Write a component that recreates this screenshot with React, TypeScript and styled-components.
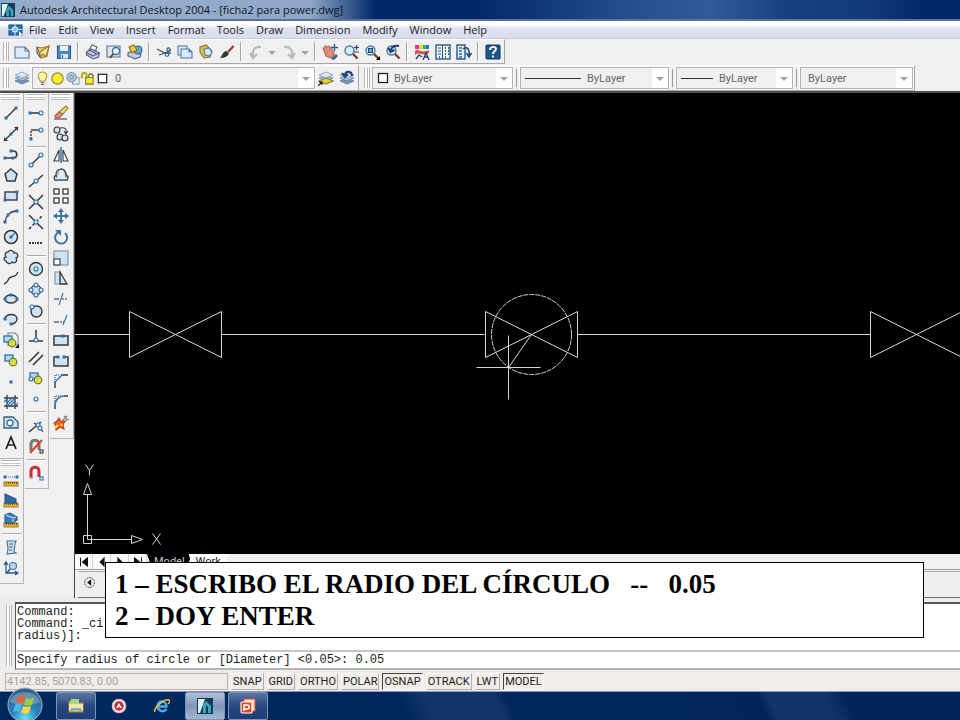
import React from "react";
import styled, { createGlobalStyle } from "styled-components";

const GlobalStyle = createGlobalStyle`
  * { box-sizing: border-box; }
  html, body { margin: 0; padding: 0; }
  body { font-family: "Open Sans", "Noto Sans", sans-serif; font-size: 11px; color: #1c1c1c; background: #f0f0f0; }
  button, select, input { font: inherit; color: inherit; margin: 0; padding: 0; border: 0; background: none; border-radius: 0; }
`;

/* ---------- icons ---------- */

const K = "#35383d";
const B = "#2f6fae";
const L = "#cfe3f3";

const dot = (x: number, y: number) => <rect x={x - 1.5} y={y - 1.5} width="3" height="3" fill={B} stroke="none" />;
const ring = (x: number, y: number, r = 2) => <circle cx={x} cy={y} r={r} fill="#e4f3fd" stroke={B} />;
const ruler = (
  <g>
    <rect x="1" y="11" width="14" height="4" fill="#efb72c" stroke="#8a6412" strokeWidth="0.8" />
    <path d="M3.5 11v2M5.500 11v2M7.500 11v2M9.500 11v2M11.500 11v2M13.500 11v2" stroke="#5d430b" strokeWidth="0.8" />
  </g>
);
const sheets = (
  <g strokeWidth="0.7">
    <path d="M1 11l7-3 7 3-7 3z" fill="#7792b8" stroke="#4f6f99" />
    <path d="M1 8l7-3 7 3-7 3z" fill="#a9bdd6" stroke="#5b7aa3" />
    <path d="M1 5l7-3 7 3-7 3z" fill="#dbe7f2" stroke="#6f8cb0" />
  </g>
);
const lens = (
  <g>
    <path d="M9.500 9.500l5 5" stroke="#7c3c20" strokeWidth="2.4" />
    <circle cx="6.500" cy="6.500" r="4.500" fill="#d7ecfa" stroke="#587b9c" strokeWidth="1.400" />
  </g>
);
const shapes = (
  <g>
    <rect x="2" y="3" width="8" height="6" fill="#b8d7f0" stroke={B} strokeWidth="1.300" />
    <circle cx="10" cy="10" r="3.800" fill="#d7df3c" fillOpacity="0.9" stroke="#6c7427" strokeWidth="1.200" />
  </g>
);

const icons: Record<string, React.ReactNode> = {
  app: (
    <g stroke="none">
      <rect width="16" height="16" fill="#123d55" />
      <path d="M1 1h7L3 15H1z" fill="#d9f1f4" />
      <path d="M6 15V7l3-4 5 5v7h-3V9L9 7v8z" fill="#3ea4bc" />
    </g>
  ),
  mdi: (
    <g>
      <rect x="2" y="3" width="13" height="10" fill="#2c75ae" stroke="#17507e" />
      <path d="M8 1v14M1 7.500h14" stroke="#9be1fb" />
      <circle cx="8" cy="7.500" r="2.500" stroke="#fff" />
      <path d="M12 9v6l2-2h2z" fill="#fff" stroke="none" />
    </g>
  ),
  new: <path d="M1 3h10l4 4v7H1z M11 3v4h4" fill="#dbeaf6" stroke="#54779c" />,
  open: (
    <g>
      <path d="M2 3l5 1 7-2-2 10-6 2z" fill="#f5cd62" stroke="#9b7423" />
      <path d="M5 8l9-6-3 11-3-3-3 3z" fill="#fbe7a9" stroke="#9b7423" />
      <path d="M2 3v6l3 4" stroke="#2e5d70" />
    </g>
  ),
  save: (
    <g>
      <path d="M1.500 2h13v12.500h-13z" fill="#4d86bd" stroke="#31608f" />
      <path d="M4 2h8v5H4z" fill="#e8f0f7" stroke="none" />
      <path d="M5 10h7v4.500H5z" fill="#dbe7f0" stroke="none" />
      <path d="M6.500 11v3" stroke="#31608f" />
    </g>
  ),
  print: (
    <g stroke="#525a7c">
      <path d="M4 6l3-5 5 2-2 5z" fill="#fff" />
      <path d="M1.500 8l5-3 8 4-1 4-5 2-7-4z" fill="#c4cce1" />
      <path d="M2 9l6 3 6-3M5 6.500l6 3" />
    </g>
  ),
  preview: (
    <g>
      <path d="M1 2h13v11H1z" fill="#d6e6f3" stroke="#54779c" />
      <path d="M8 9l-4 5" stroke="#6b4429" strokeWidth="2" />
      <circle cx="10" cy="7" r="3.500" fill="#eaf7ff" stroke="#3f6a94" strokeWidth="1.300" />
    </g>
  ),
  publish: (
    <g>
      <path d="M1 9l6-3 7 4-1 3-5 2-7-3z" fill="#c4cce1" stroke="#525a7c" />
      <circle cx="11" cy="6" r="4" fill="#65a5d3" stroke="#2e6390" />
      <path d="M2 3l5-2 3 5-5 3z" fill="#f3c93b" stroke="#8d6e16" />
    </g>
  ),
  cut: (
    <g>
      <path d="M1 5l8 4h6M3 11l6-2 6-3" stroke="#3a5673" strokeWidth="1.300" />
      <circle cx="11" cy="10.500" r="1.800" stroke="#3a5673" />
      <circle cx="12.500" cy="5.500" r="1.600" stroke="#3a5673" />
    </g>
  ),
  copyclip: (
    <g fill="#dcebf7" stroke="#477aa8">
      <path d="M1 2h9v9H1z" />
      <path d="M4 5h8l3 3v6H4z M12 5v3h3" />
    </g>
  ),
  paste: (
    <g>
      <path d="M2 3l6-2 6 6-2 6-6 1-4-6z" fill="#e4bf4a" stroke="#86702a" />
      <path d="M6 5l5-1 3 4-2 4-5-1z" fill="#d6e8f6" stroke="#477aa8" />
    </g>
  ),
  brush: (
    <g>
      <path d="M14.500 2L9 8" stroke="#a23b2c" strokeWidth="2.200" />
      <path d="M1 14c2-1 2-6 6-7l3 2c-1 4-5 5-9 5z" fill="#393534" stroke="none" />
    </g>
  ),
  undo: <path d="M13 3C7 2 4 6 5 12M2 9l3 5 4-4" stroke="#b8b8b8" strokeWidth="2.200" />,
  redo: <path d="M3 3c6-1 9 3 8 9M14 9l-3 5-4-4" stroke="#b8b8b8" strokeWidth="2.200" />,
  caret: <path d="M4 7h8L8 11z" fill="#a2a2a2" stroke="none" />,
  pan: (
    <g>
      <path d="M1 4l2 0 0-2 2 1 2-1 5 6v3l-3 3-5-2z" fill="#dd8b7c" stroke="#b5695c" />
      <path d="M9 15l5-5 2 2-4 4z" fill="#3a618a" stroke="none" />
      <path d="M12.500 0v7M9 3.500h7" stroke="#2b5688" strokeWidth="1.300" />
    </g>
  ),
  zoomrt: (
    <g>{lens}<path d="M13.500 1v5M11 3.500h5M11 8h5" stroke="#234d78" strokeWidth="1.200" /></g>
  ),
  zoomwin: (
    <g>{lens}<rect x="4.500" y="4.500" width="4" height="4" fill="#74a8d3" stroke="#234d78" /><path d="M16 12v4h-4z" fill="#000" stroke="none" /></g>
  ),
  zoomprev: (
    <g>{lens}<path d="M14 2c-4-1-7 0-8 4M3.500 4l2 4 4-2" stroke="#183d6b" strokeWidth="2" /></g>
  ),
  props: (
    <g stroke="none">
      <path d="M1 1h4v4H1z" fill="#f02ba0" /><path d="M5 1h4v4H5z" fill="#f4d92b" /><path d="M9 1h3v4H9z" fill="#30b95d" /><path d="M12 1h3v4h-3z" fill="#2c6ddb" />
      <path d="M1 7c3-3 6 3 14-1v3c-7 4-9-2-14 2z" fill="#c5584d" />
      <path d="M2 15l3-4 3 2M9 16l3-7 3 7M10 13h4" fill="none" stroke="#29466b" strokeWidth="1.400" />
    </g>
  ),
  dcenter: (
    <g>
      <rect x="1" y="1" width="14" height="14" fill="#eef4fa" stroke="#28588c" strokeWidth="1.400" />
      <path d="M7.500 1v14M3 4h3M3 7h3M3 10h3" stroke="#28588c" />
      <path d="M10 4h1M13 4h1M10 7h1M13 7h1M10 10h1M13 10h1M10 13h1M4 13h1" stroke="#42722f" strokeWidth="2" />
    </g>
  ),
  tools: (
    <g>
      <path d="M1 1h8v14H1z" fill="#e6eff8" stroke="#28588c" strokeWidth="1.400" />
      <path d="M3 4h3M3 7h3M3 10h3M3 13h3" stroke="#33679b" strokeWidth="1.400" />
      <path d="M7 5c4-3 7 0 6 6M10.500 9l2.500 4 2.500-4" stroke="#28466b" strokeWidth="1.500" />
    </g>
  ),
  help: (
    <g>
      <rect x="1" y="1" width="14" height="14" rx="1" fill="#1f5687" stroke="#123d66" />
      <path d="M5 6c0-4 6-4 6-1 0 2-3 2-3 5M8 11.500v2" stroke="#fff" strokeWidth="1.900" />
    </g>
  ),
  layers: sheets,
  layerset: (
    <g>{sheets}<path d="M1 11l7-3 7 3-7 3z" fill="#e1d442" stroke="#8f8624" /><path d="M0 16l4-4M1 12h3v3" stroke="#111" /></g>
  ),
  layerprev: <g>{sheets}<path d="M13 6c0-5-6-6-7-1M3 3l3 4 3-3" stroke="#1c4375" strokeWidth="2" /></g>,
  bulb: (
    <g>
      <path d="M5.500 11C5 9 3.500 8 3.500 5.500a4.500 4.500 0 0 1 9 0C12.500 8 11 9 10.500 11z" fill="#fdf6a1" stroke="#a39a36" />
      <path d="M6 12.500h4M6.500 14.500h3" stroke="#666" />
    </g>
  ),
  sun: <circle cx="8" cy="8" r="6" fill="#f7ee34" stroke="#8f8c2d" strokeWidth="1.200" />,
  vpfreeze: (
    <g>
      <rect x="8" y="7" width="7" height="7" fill="#e6edf2" stroke="#8a9dad" />
      <circle cx="7" cy="6.500" r="5" fill="#b7cddd" stroke="#7892a6" /><circle cx="7" cy="6.500" r="2" stroke="#7892a6" />
    </g>
  ),
  lock: (
    <g>
      <path d="M2 8V5c0-4 5-4 5 0v4" stroke="#b3ae23" strokeWidth="2.200" />
      <path d="M6 7h8v7H6z" fill="#f0ea3d" stroke="#827e22" /><path d="M9 7c0-6 5-5 5 0" stroke="#827e22" strokeWidth="1.500" />
    </g>
  ),
  swatch: <rect x="3.500" y="3.500" width="9" height="9" fill="#fff" stroke="#222" strokeWidth="1.300" />,
  line: <g><path d="M3 13L13 3" strokeWidth="1.400" />{dot(3, 13)}{dot(13, 3)}</g>,
  xline: <g><path d="M1 15L15 1" strokeWidth="1.500" /><path d="M11 1h4v4zM1 11v4h4z" fill={K} stroke="none" />{dot(8, 8)}</g>,
  pline: <g><path d="M2 12h8c5 0 5-7 0-7H8" strokeWidth="1.700" />{dot(2, 12)}{dot(8, 5)}{dot(10, 12)}</g>,
  polygon: <path d="M8 2l6 5-2 7H4L2 7z" fill={L} strokeWidth="1.500" />,
  rect: <g><rect x="2" y="4" width="12" height="8" fill={L} strokeWidth="1.400" />{dot(14, 4)}{dot(2, 12)}</g>,
  arc: <g><path d="M2 14C3 8 7 3 14 3" strokeWidth="1.400" />{dot(2, 14)}{dot(5, 7)}{dot(14, 3)}</g>,
  circle: <g><circle cx="8" cy="8" r="6.500" fill={L} strokeWidth="1.500" /><path d="M8 8l4-4" stroke={B} />{dot(8, 8)}</g>,
  cloud: <path d="M5 3c2-3 6-1 6 1 4-1 5 4 2 5 2 4-2 6-4 4-2 3-6 1-6-1-3-1-2-4 0-4-2-3 0-5 2-5z" fill={L} strokeWidth="1.300" />,
  spline: <path d="M1 14c5-1 3-6 7-7s5-1 7-5" strokeWidth="1.300" />,
  ellipse: <g><ellipse cx="8" cy="8" rx="6" ry="4" fill={L} strokeWidth="1.500" />{dot(2, 8)}{dot(14, 8)}{dot(8, 4)}</g>,
  earc: <g><path d="M2 8c1-6 12-6 12 0 0 3-3 5-6 5" fill={L} strokeWidth="1.400" />{dot(2, 8)}{dot(8, 13)}</g>,
  insert: <g><path d="M5 1h7l3 3v9H5z" fill="#eef5fa" stroke="#65839b" /><g transform="translate(-1 1)">{shapes}</g><path d="M16 12v4h-4z" fill="#111" stroke="none" /></g>,
  block: shapes,
  point: dot(8, 9),
  hatch: <g><path d="M4 1v14M12 1v14M1 4h14M1 12h14" strokeWidth="1.300" /><path d="M4 9l5-5M4 12l8-8M7 12l5-5M1 8l3-3M12 12l3-3" stroke={B} /></g>,
  region: <g><path d="M1 3h9l5 5v6H1z" fill={L} stroke="#3b5e82" strokeWidth="1.300" /><circle cx="7" cy="9" r="3" fill="#fff" stroke={B} strokeWidth="1.300" /></g>,
  text: <path d="M3 14L8 2l5 12M5 10h6" stroke="#1e1e1e" strokeWidth="1.700" />,
  dist: <g>{ruler}<path d="M3 6h10" stroke={B} strokeDasharray="1 1" />{dot(2, 6)}{dot(14, 6)}</g>,
  area: <g>{ruler}<path d="M2 2l11 5v4H2z" fill="#2f6ba6" stroke="#235585" /></g>,
  mass: <g>{ruler}<path d="M2 3l5-2 7 4v3l-4 3H2z" fill="#3f7db8" stroke="#235585" /><path d="M3 3l7 3 3-1M10 7v3" stroke="#c9e3f6" /></g>,
  list: <g><path d="M4 2l9 0-1 3-1 8 2 1-9 1 1-5z" fill="#cfe1ee" stroke="#4a718f" /><path d="M6 5h4M6 8h4M6 11h3" stroke="#3c617f" /></g>,
  locate: <g><path d="M3 3v10h11M1 5l2-3 2 3M12 11l3 2-3 2" stroke="#285989" strokeWidth="1.300" /><path d="M7 9l-3 4" stroke="#285989" strokeWidth="1.500" /><circle cx="10" cy="6" r="3.500" fill="#b7d8ee" stroke="#3f6f9b" /></g>,
  track: <g><path d="M2 8h12" strokeWidth="1.500" />{dot(2, 8)}{ring(13, 8)}</g>,
  from: <g><path d="M3 13V5" strokeDasharray="2 1" strokeWidth="1.400" /><path d="M3 4h10" strokeWidth="1.400" />{dot(3, 13)}{ring(13, 4)}</g>,
  endpt: <g><path d="M3 13L13 3" strokeWidth="1.400" />{ring(13, 3)}{ring(3, 13)}</g>,
  midpt: <g><path d="M1 14L15 2" strokeWidth="1.400" />{ring(8, 8)}</g>,
  inter: <g><path d="M1 1l14 14M1 15L15 1" strokeWidth="1.500" />{ring(8, 8)}</g>,
  appint: <g><path d="M1 1l14 14" strokeWidth="1.500" /><path d="M1 15L15 1" strokeDasharray="3 2" strokeWidth="1.500" />{ring(8, 8)}</g>,
  extension: <path d="M1 8h7M9 8h6" strokeWidth="1.800" strokeDasharray="2 1" />,
  center: <g><circle cx="8" cy="8" r="6.500" fill={L} strokeWidth="1.400" />{ring(8, 8)}</g>,
  quadrant: <g><circle cx="8" cy="8" r="5" fill={L} />{ring(8, 3)}{ring(8, 13)}{ring(3, 8)}{ring(13, 8)}</g>,
  tangent: <g><circle cx="8.500" cy="8.500" r="5.500" fill={L} strokeWidth="1.400" />{ring(4, 4)}</g>,
  perp: <g><path d="M8 1v10M1 12h14" strokeWidth="1.500" />{ring(8, 11)}</g>,
  parallel: <path d="M1 12L11 2M5 15L15 5" strokeWidth="1.600" />,
  insertpt: <g>{shapes}{ring(3, 9)}</g>,
  node: ring(8, 8),
  nearest: <g><path d="M1 14L13 4" strokeWidth="1.500" /><path d="M6 5l4 3 5 6" />{ring(10, 7)}{ring(12, 10)}</g>,
  none: <g><path d="M3 13V6c0-5 8-5 8 0v6" stroke="#7d776f" strokeWidth="3" /><path d="M2 15L14 2" stroke="#e33c2c" strokeWidth="2" /><rect x="12" y="12" width="3" height="3" /></g>,
  osnap: <g><path d="M3 13V6c0-5 8-5 8 0v6" stroke="#c42f38" strokeWidth="3" /><path d="M1.500 13h3" stroke="#aaa" strokeWidth="2" /><rect x="12" y="12" width="3" height="3" fill="#fff" stroke={B} /></g>,
  erase: <g><path d="M1 14h13" stroke="#444" /><path d="M2 11l4-4 4 2-4 4H3z" fill="#ed8b83" stroke="#9e514b" /><path d="M6 7l7-6 2 2-5 6z" fill="#f0df67" stroke="#8f8331" /></g>,
  copy: <g><circle cx="4" cy="4" r="3" fill={L} /><circle cx="7" cy="11" r="3" fill={L} /><circle cx="12" cy="12" r="3" fill={L} /><path d="M7 2c5-1 7 1 6 5M11 5l2 3 2-3" stroke={K} /></g>,
  mirror: <g><path d="M6 3v11H1zM10 3v11h5z" fill="#fafafa" /><path d="M8 0v16" stroke={B} strokeWidth="1.500" /></g>,
  offset: <g><path d="M1 13h14M1 10h3c-1-2 0-3 1-3-1-7 8-7 7 0 1 0 2 1 1 3h2" strokeWidth="1.200" stroke={B} /><path d="M2 13c-2-3 0-5 1-4C2 0 14 0 13 9c2-1 3 1 1 4z" fill={L} fillOpacity="0.5" strokeWidth="1.200" /></g>,
  array: <g fill="#fff" strokeWidth="1.300"><rect x="1" y="1" width="5" height="5" /><rect x="10" y="1" width="5" height="5" /><rect x="1" y="10" width="5" height="5" /><rect x="10" y="10" width="5" height="5" /></g>,
  move: <g><path d="M8 2v12M2 8h12" stroke="#4473a2" strokeWidth="2" /><path d="M8 0l3 4H5zM8 16l3-4H5zM0 8l4-3v6zM16 8l-4-3v6z" fill="#4473a2" stroke="none" /></g>,
  rotate: <g><path d="M6 3a6 6 0 1 0 6 1" stroke="#4473a2" strokeWidth="2" /><path d="M2 1h6v6z" fill="#4473a2" stroke="none" /></g>,
  scale: <g><rect x="1" y="1" width="14" height="14" fill={L} stroke="#7b91a7" /><rect x="1" y="9" width="6" height="6" fill="#fff" /></g>,
  stretch: <g><path d="M2 2h5v12H2z" fill={L} stroke="#7b91a7" /><path d="M7 2l7 12H7z" fill={L} strokeWidth="1.300" /></g>,
  trim: <g><path d="M6 14L10 2" stroke={B} /><path d="M1 8h5" /><path d="M9 8h6" strokeDasharray="2 1" /></g>,
  extend: <g><path d="M10 13l4-10" stroke={B} /><path d="M1 10h5" /><path d="M7 10h4" strokeDasharray="2 1" /></g>,
  break1: <g><path d="M1 4h14v9H1z" fill={L} strokeWidth="1.500" />{dot(10, 4)}</g>,
  break2: <g><path d="M2 4v9h12V4z" fill={L} stroke="none" /><path d="M5 4H1v9h14V4h-4" strokeWidth="1.500" />{dot(5, 4)}{dot(11, 4)}</g>,
  chamfer: <g><path d="M2 15V8M8 2h7" strokeWidth="1.400" /><path d="M2 7V2h5" strokeDasharray="1 1" /><path d="M2 9l7-7" stroke={B} strokeWidth="1.500" /></g>,
  fillet: <g><path d="M2 15v-4M11 2h4" strokeWidth="1.400" /><path d="M2 9V2h7" strokeDasharray="1 1" /><path d="M2 11c0-5 4-9 9-9" stroke={B} strokeWidth="1.700" /></g>,
  explode: <g><path d="M1 8l3-2 2-3 2 4 4-1-2 4 1 4-4-2-4 3v-4z" fill="#ee6a23" stroke="#ba3a1e" /><path d="M2 13l3-3M8 9l1 2" stroke="#f8df35" strokeWidth="2" /><path d="M9 6l5-5M11 1l3 3M12 6l4-2" stroke="#777" /></g>,
  first: <path d="M4 3v10M12 3v10L6 8z" fill="#111" stroke="#111" />,
  prev: <path d="M11 2v12L5 8z" fill="#111" stroke="none" />,
  next: <path d="M5 2v12l6-6z" fill="#111" stroke="none" />,
  last: <path d="M12 3v10M4 3v10l6-5z" fill="#111" stroke="#111" />,
  back: <g><circle cx="8" cy="8" r="6" stroke="#222" strokeDasharray="2 1" /><path d="M10 4v8L5 8z" fill="#111" stroke="none" /></g>,
  explorer: (
    <g>
      <path d="M1 3h6l1 2h7v9H1z" fill="#e9c55a" stroke="#a98a30" /><path d="M3 1h8v6H3z" fill="#a8d98b" stroke="none" />
      <path d="M1 6h14v6H1z" fill="#f9e7a0" stroke="none" /><path d="M4 14v-3h8v3" stroke="#5cb4e4" strokeWidth="2" />
    </g>
  ),
  media: (
    <g>
      <circle cx="8" cy="8" r="6.800" fill="#f1eded" stroke="#c9c2c2" /><circle cx="8" cy="8" r="4.700" fill="#cc2534" stroke="none" />
      <path d="M8 5l3 5H9L8 8l-1 2H5z" fill="#fff" stroke="none" />
    </g>
  ),
  ie: (
    <g>
      <path d="M12.500 11c-3 4-9 2-9-3 0-6 9-6 9 .5h-8" stroke="#45aee9" strokeWidth="2.400" />
      <path d="M1 14c-3-3 10-14 14-12 2 1 0 3-1 4" stroke="#edc23c" strokeWidth="1.500" />
    </g>
  ),
  ppt: (
    <g>
      <path d="M4 1h11v12H4z" fill="#f6d5cb" stroke="#d84e2e" /><rect x="1" y="4" width="11" height="11" rx="1" fill="#d94a2b" stroke="#fff" />
      <path d="M4 13V7h3c3 0 3 4 0 4H4" stroke="#fff" strokeWidth="1.500" />
    </g>
  ),
};

const Svg = styled.svg<{ $size?: number }>`
  width: ${(p) => p.$size ?? 16}px;
  height: ${(p) => p.$size ?? 16}px;
  flex: none;
  display: block;
`;

const Icon = ({ name, size }: { name: string; size?: number }) => (
  <Svg $size={size} viewBox="0 0 16 16" fill="none" stroke={K} strokeWidth="1.100" aria-hidden="true">
    {icons[name]}
  </Svg>
);

/* ---------- frame ---------- */

const Page = styled.div`
  position: relative;
  display: grid;
  grid-template-rows: 21px 18px 26px 28px minmax(400px, 1fr) 73px 21px 28px;
  min-height: 100vh;
  overflow: hidden;
`;

const TitleBar = styled.header`
  display: flex;
  align-items: center;
  gap: 5px;
  padding: 0 1px;
  color: #10151d;
  white-space: nowrap;
  border-bottom: 2px solid #5c7398;
  background:
    linear-gradient(90deg, #8ea7c8 0, #9bb0cd 60px, #8fa8c9 310px, transparent 375px),
    linear-gradient(90deg, #03296a 0%, #03296a 50%, #274f8e 66%, #315a98 74%, #17407f 82%, #143b79 90%, #03296a 96%);
`;

const Title = styled.h1`
  margin: 0;
  font-size: 11px;
  line-height: 18px;
  font-weight: 400;
`;

const MenuBar = styled.nav`
  display: flex;
  align-items: center;
  gap: 12px;
  padding-left: 7px;
  background: linear-gradient(#fdfdff 0 25%, #dde2f0 45%, #d8deee);
  border-bottom: 1px solid #c9cdd8;
`;

const MenuItem = styled.button`
  font-size: 11px;
  line-height: 16px;
`;

const MenuIcon = styled.span`
  margin-right: -6px;
`;

const Bar = styled.div`
  display: flex;
  align-items: stretch;
  min-width: 0;
  border-bottom: 1px solid #f0f0f0;
`;

const BottomBar = styled(Bar)`
  border-bottom: 2px solid #4d4d4d;
`;

const Strip = styled.div<{ $start?: boolean }>`
  display: flex;
  align-items: center;
  padding: 0 1px 0 ${(p) => (p.$start ? 3 : 5)}px;
  border: 1px solid #a6a6a6;
  border-width: 0 1px 1px 0;
  border-top: 1px solid #fff;
`;

const Grip = styled.span`
  align-self: stretch;
  flex: none;
  width: 6px;
  margin: 2px 2px 2px 0;
  border: 2px solid #b5b5b5;
  border-width: 0 1px;
  background: linear-gradient(90deg, #fff 0 2px, #b5b5b5 2px 3px, #fff 3px);
`;

const ToolButton = styled.button<{ $narrow?: boolean }>`
  display: flex;
  align-items: center;
  justify-content: center;
  flex: none;
  width: ${(p) => (p.$narrow ? 12 : 21)}px;
  height: 20px;
`;

const Divider = styled.span`
  flex: none;
  width: 8px;
  height: 19px;
  background: linear-gradient(90deg, transparent 3px, #a2a2a2 3px 4px, #fff 4px 5px, transparent 5px);
`;

const Combo = styled.label<{ $width: number }>`
  display: flex;
  align-items: center;
  width: ${(p) => p.$width}px;
  height: 22px;
  padding-left: 2px;
  border: 1px solid #b2b2b2;
  outline: 1px solid #fafafa;
  color: #666;
`;

const ComboSelect = styled.select`
  flex: 1;
  min-width: 0;
  height: 20px;
  padding-left: 3px;
  appearance: none;
  font-family: Roboto, sans-serif;
  font-size: 11px;
  outline: none;
`;

const ComboArrow = styled.span`
  display: flex;
  align-items: center;
  justify-content: center;
  width: 16px;
  height: 20px;
  background: #fff;
`;

const Sample = styled.span<{ $width: number }>`
  flex: none;
  width: ${(p) => p.$width}px;
  height: 1px;
  margin: 0 3px 0 2px;
  background: #333;
`;

const ComboIcons = styled.span`
  display: flex;
  margin-right: 2px;
`;

const Thin = styled.span`
  width: 1px;
  height: 18px;
  margin: 0 3px;
  background: #9a9a9a;
`;

/* ---------- workspace ---------- */

const Workspace = styled.main`
  display: grid;
  grid-template-columns: 74px minmax(0, 1fr);
  min-height: 0;
`;

const Palettes = styled.aside`
  display: flex;
  align-items: flex-start;
  gap: 1px;
`;

const Column = styled.div`
  flex: none;
`;

const Palette = styled.div`
  display: flex;
  flex-direction: column;
  width: 24px;
  padding: 1px 0 5px;
  border: 1px solid #b4b4b4;
  border-width: 0 1px 1px 0;
`;

const PaletteGrip = styled.span`
  height: 6px;
  margin: 0 3px 3px 1px;
  border: 1px solid #b9b9b9;
  border-width: 1px 0;
  background: linear-gradient(#fff 0 2px, #c4c4c4 2px 3px, #fff 3px);
`;

const PaletteList = styled.div<{ $height: number }>`
  display: flex;
  flex-direction: column;
  height: ${(p) => p.$height}px;
`;

const PaletteButton = styled.button`
  display: flex;
  flex: 1;
  min-height: 0;
  align-items: center;
  justify-content: center;
  width: 22px;
`;

const PaletteRule = styled.span`
  flex: none;
  height: 6px;
  margin: 0 2px;
  background: linear-gradient(transparent 2px, #aaa 2px 3px, #fff 3px 4px, transparent 4px);
`;

const Document = styled.section`
  display: grid;
  grid-template-rows: minmax(0, 1fr) 16px 28px;
  border-left: 1px solid #444;
`;

const Canvas = styled.svg`
  display: block;
  width: 100%;
  height: 100%;
  background: #000;
`;

const TabRow = styled.div`
  display: flex;
  background: #f1f1f1;
  border-bottom: 1px solid #9d9d9d;
`;

const TabArrow = styled.button`
  display: flex;
  align-items: center;
  justify-content: center;
  width: 18px;
  border-right: 1px solid #d4d4d4;
  background: #fafafa;
`;

const Tab = styled.button<{ $active?: boolean }>`
  height: 15px;
  padding: 0 7px;
  margin-right: ${(p) => (p.$active ? -3 : 0)}px;
  font-family: Roboto, sans-serif;
  font-size: 11px;
  line-height: 14px;
  color: ${(p) => (p.$active ? "#c8c8c8" : "#222")};
  background: ${(p) => (p.$active ? "#000" : "#fff")};
  clip-path: polygon(0 0, 100% 0, calc(100% - 5px) 100%, 5px 100%);
`;

const ScrollRow = styled.div`
  display: flex;
  align-items: center;
  padding: 0 0 4px 5px;
  margin: 1px 0 0 3px;
  border-top: 1px solid #a9a9a9;
  border-bottom: 1px solid #6d6d6d;
  background: #f0eded;
`;

/* ---------- command line and status ---------- */

const CommandArea = styled.section`
  display: flex;
  padding: 4px 0 1px 6px;
  background: #ececec;
`;

const CommandGrip = styled(Grip)`
  margin: 3px 3px 4px 0;
`;

const CommandBox = styled.div`
  flex: 1;
  min-width: 0;
  display: grid;
  grid-template-rows: 1fr 16px;
  padding-left: 1px;
  background: #fff;
  border: 1px solid #555;
  border-width: 2px 0 2px 1px;
  border-bottom-color: #b5b5b5;
  font-family: "Liberation Mono", monospace;
  font-size: 12px;
  line-height: 12px;
  color: #222;
`;

const History = styled.pre`
  margin: 0;
  padding-top: 2px;
  font: inherit;
  border-bottom: 2px solid #c6c6c6;
`;

const CommandInput = styled.input`
  width: 100%;
  font: inherit;
  outline: none;
`;

const StatusBar = styled.div`
  display: flex;
  align-items: center;
  gap: 3px;
  padding: 2px 5px 1px;
  background: #f0ecea;
  border-bottom: 1px solid #8b99b2;
  font-family: Roboto, sans-serif;
  font-size: 11px;
`;

const Coordinates = styled.output`
  width: 223px;
  height: 17px;
  padding-left: 1px;
  line-height: 15px;
  color: #a2a2a2;
  border: 1px solid #b9b5b3;
`;

const Toggle = styled.button<{ $on?: boolean }>`
  height: 17px;
  padding: 0 1px;
  line-height: 15px;
  border: 1px solid;
  border-color: ${(p) => (p.$on ? "#444 #f8f8f8 #f8f8f8 #444" : "#faf8f7 #b0adab #b0adab #faf8f7")};
`;

const TaskBar = styled.footer`
  display: flex;
  align-items: stretch;
  gap: 3px;
  padding-left: 7px;
  background: linear-gradient(65deg, #02265e 0 42%, #12356e 45% 52%, #02265e 53% 70%, #02245b 79%, #10336b 80% 86%, #02245b 88%);
`;

const Orb = styled.button`
  position: relative;
  align-self: flex-start;
  width: 36px;
  height: 36px;
  margin: -5px 10px -5px 0;
`;

const TaskButton = styled.button<{ $state: "idle" | "open" | "active" }>`
  display: flex;
  align-items: center;
  justify-content: center;
  width: 40px;
  border: 1px solid ${(p) => (p.$state === "idle" ? "transparent" : "#7f93b5")};
  border-radius: 2px;
  background: ${(p) =>
    p.$state === "active"
      ? "linear-gradient(#b3c2d8, #7e96b9 50%, #a4b7d1)"
      : p.$state === "open"
      ? "linear-gradient(#5c76a3, #27477e 50%, #1c3d77)"
      : "none"};
`;

const Note = styled.aside`
  position: absolute;
  left: 105px;
  right: 36px;
  bottom: 82px;
  padding: 5px 9px;
  background: #fff;
  border: 1px solid #000;
  color: #000;
  font-family: "Liberation Serif", serif;
  font-size: 27px;
  line-height: 32px;
  font-weight: 700;
  white-space: pre-wrap;
`;

const NoteLine = styled.p`
  margin: 0;
`;

/* ---------- data ---------- */

const menus = ["File", "Edit", "View", "Insert", "Format", "Tools", "Draw", "Dimension", "Modify", "Window", "Help"];
const standard =
  "new open save | print preview publish | cut copyclip paste brush | undo caret redo caret | pan zoomrt zoomwin zoomprev | props dcenter tools | help".split(" ");
const draw = "line xline pline polygon rect arc circle cloud spline ellipse earc insert block point hatch region text".split(" ");
const inquiry = "dist area mass | list locate".split(" ");
const snaps =
  "track from | endpt midpt inter appint extension | center quadrant tangent | perp parallel insertpt node | nearest none | osnap".split(" ");
const modify = "erase copy mirror offset array move rotate scale stretch trim extend break1 break2 chamfer fillet explode".split(" ");
const toggles: [string, boolean][] = [
  ["SNAP", false], ["GRID", false], ["ORTHO", false], ["POLAR", false],
  ["OSNAP", true], ["OTRACK", false], ["LWT", false], ["MODEL", true],
];

const ToolPalette = ({ names, height }: { names: string[]; height: number }) => (
  <Palette>
    <PaletteGrip />
    <PaletteList $height={height}>
      {names.map((n, i) =>
        n === "|" ? <PaletteRule key={i} /> : (
          <PaletteButton key={i} aria-label={n}><Icon name={n} /></PaletteButton>
        )
      )}
    </PaletteList>
  </Palette>
);

interface PropertyComboProps {
  label: string;
  width: number;
  value: string;
  children?: React.ReactNode;
}

const PropertyCombo = ({ label, width, value, children }: PropertyComboProps) => (
  <Combo $width={width}>
    {children}
    <ComboSelect aria-label={label} defaultValue={value}>
      <option>{value}</option>
    </ComboSelect>
    <ComboArrow><Icon name="caret" /></ComboArrow>
  </Combo>
);

const Valve = ({ x }: { x: number }) => (
  <path d={`M${x - 46} 219v46l92-46v46z`} />
);

const Drawing = () => (
  <Canvas fill="none" stroke="#d6d6d6" strokeWidth="1" role="img" aria-label="Model space">
    <g transform="translate(-0.5 -0.5)">
      <path d="M0 242h55M147 242h263M503 242h293" />
      <Valve x={101} />
      <Valve x={457} />
      <Valve x={842} />
      <circle cx="457" cy="242" r="40" strokeDasharray="5 1" />
      <path d="M457 242l-23 33" />
      <path d="M402 275h64M434 243v64" />
      <path d="M9 443h8v8H9zM13 447v-45M13 447h44M9 402l4-11 4 11zM57 443v8l11-4z" />
      <path d="M11 372l4 6 4-6M15 378v5M78 441l8 11M86 441l-8 11" />
    </g>
  </Canvas>
);

const StartOrb = () => (
  <Svg $size={36} viewBox="0 0 36 36" aria-hidden="true">
    <defs>
      <radialGradient id="orb" cx="50%" cy="90%" r="85%">
        <stop offset="0" stopColor="#6fe3f7" />
        <stop offset="0.45" stopColor="#2384b8" />
        <stop offset="1" stopColor="#3a5d85" />
      </radialGradient>
    </defs>
    <circle cx="18" cy="18" r="17" fill="url(#orb)" stroke="#9dbbd0" />
    <path d="M3 15C5 2 31 2 33 15c-9 4-21 4-30 0z" fill="#fff" fillOpacity="0.25" />
    <path d="M11 10c3-2 5-1 7 0l-2 7c-3-2-5-1-7 0z" fill="#ee6132" />
    <path d="M19 11c3 1 5 1 8 0l-2 7c-3 1-5 1-8 0z" fill="#9bcf45" />
    <path d="M8 18c3-2 5-1 7 0l-2 7c-3-1-4-1-7 0z" fill="#50b4ed" />
    <path d="M16 19c3 1 5 1 8 0l-2 7c-3 1-5 1-8 0z" fill="#fbd348" />
  </Svg>
);

export default function App() {
  return (
    <Page>
      <GlobalStyle />
      <TitleBar>
        <Icon name="app" size={14} />
        <Title>Autodesk Architectural Desktop 2004 - [ficha2 para power.dwg]</Title>
      </TitleBar>
      <MenuBar>
        <MenuIcon><Icon name="mdi" /></MenuIcon>
        {menus.map((m) => <MenuItem key={m}>{m}</MenuItem>)}
      </MenuBar>
      <Bar>
        <Strip $start>
          <Grip />
          {standard.map((n, i) =>
            n === "|" ? <Divider key={i} /> : (
              <ToolButton key={i} aria-label={n} $narrow={n === "caret"}><Icon name={n} /></ToolButton>
            )
          )}
        </Strip>
      </Bar>
      <BottomBar>
        <Strip $start>
          <Grip />
          <ToolButton aria-label="Layer manager"><Icon name="layers" /></ToolButton>
          <PropertyCombo label="Layer" width={283} value="0">
            <ComboIcons>
              {["bulb", "sun", "vpfreeze", "lock", "swatch"].map((n) => <Icon key={n} name={n} size={15} />)}
            </ComboIcons>
          </PropertyCombo>
          <ToolButton aria-label="Make layer current"><Icon name="layerset" /></ToolButton>
          <ToolButton aria-label="Previous layer"><Icon name="layerprev" /></ToolButton>
        </Strip>
        <Strip>
          <Grip />
          <PropertyCombo label="Color" width={141} value="ByLayer"><Icon name="swatch" /></PropertyCombo>
          <Thin />
          <PropertyCombo label="Linetype" width={149} value="ByLayer"><Sample $width={56} /></PropertyCombo>
          <Thin />
          <PropertyCombo label="Lineweight" width={117} value="ByLayer"><Sample $width={32} /></PropertyCombo>
          <Thin />
          <PropertyCombo label="Plot style" width={113} value="ByLayer"><ComboIcons /></PropertyCombo>
        </Strip>
      </BottomBar>
      <Workspace>
        <Palettes>
          <Column>
            <ToolPalette names={draw} height={350} />
            <ToolPalette names={inquiry} height={109} />
          </Column>
          <Column><ToolPalette names={snaps} height={380} /></Column>
          <Column><ToolPalette names={modify} height={330} /></Column>
        </Palettes>
        <Document>
          <Drawing />
          <TabRow>
            {["first", "prev", "next", "last"].map((n) => (
              <TabArrow key={n} aria-label={n}><Icon name={n} size={14} /></TabArrow>
            ))}
            <Tab $active>Model</Tab>
            <Tab>Work</Tab>
          </TabRow>
          <ScrollRow><Icon name="back" size={13} /></ScrollRow>
        </Document>
      </Workspace>
      <CommandArea>
        <CommandGrip />
        <CommandBox>
          <History>{"Command:\nCommand: _ci\nradius)]:"}</History>
          <CommandInput aria-label="Command line" defaultValue="Specify radius of circle or [Diameter] <0.05>: 0.05" />
        </CommandBox>
      </CommandArea>
      <StatusBar>
        <Coordinates>4142.85, 5070.83, 0.00</Coordinates>
        {toggles.map(([name, on]) => <Toggle key={name} $on={on} aria-pressed={on}>{name}</Toggle>)}
      </StatusBar>
      <TaskBar>
        <Orb aria-label="Start"><StartOrb /></Orb>
        <TaskButton $state="open" aria-label="Explorer"><Icon name="explorer" /></TaskButton>
        <TaskButton $state="idle" aria-label="Media"><Icon name="media" /></TaskButton>
        <TaskButton $state="idle" aria-label="Internet Explorer"><Icon name="ie" /></TaskButton>
        <TaskButton $state="active" aria-label="Architectural Desktop"><Icon name="app" /></TaskButton>
        <TaskButton $state="open" aria-label="PowerPoint"><Icon name="ppt" /></TaskButton>
      </TaskBar>
      <Note>
        <NoteLine>{"1 – ESCRIBO EL RADIO DEL CÍRCULO   --   0.05"}</NoteLine>
        <NoteLine>2 – DOY ENTER</NoteLine>
      </Note>
    </Page>
  );
}
